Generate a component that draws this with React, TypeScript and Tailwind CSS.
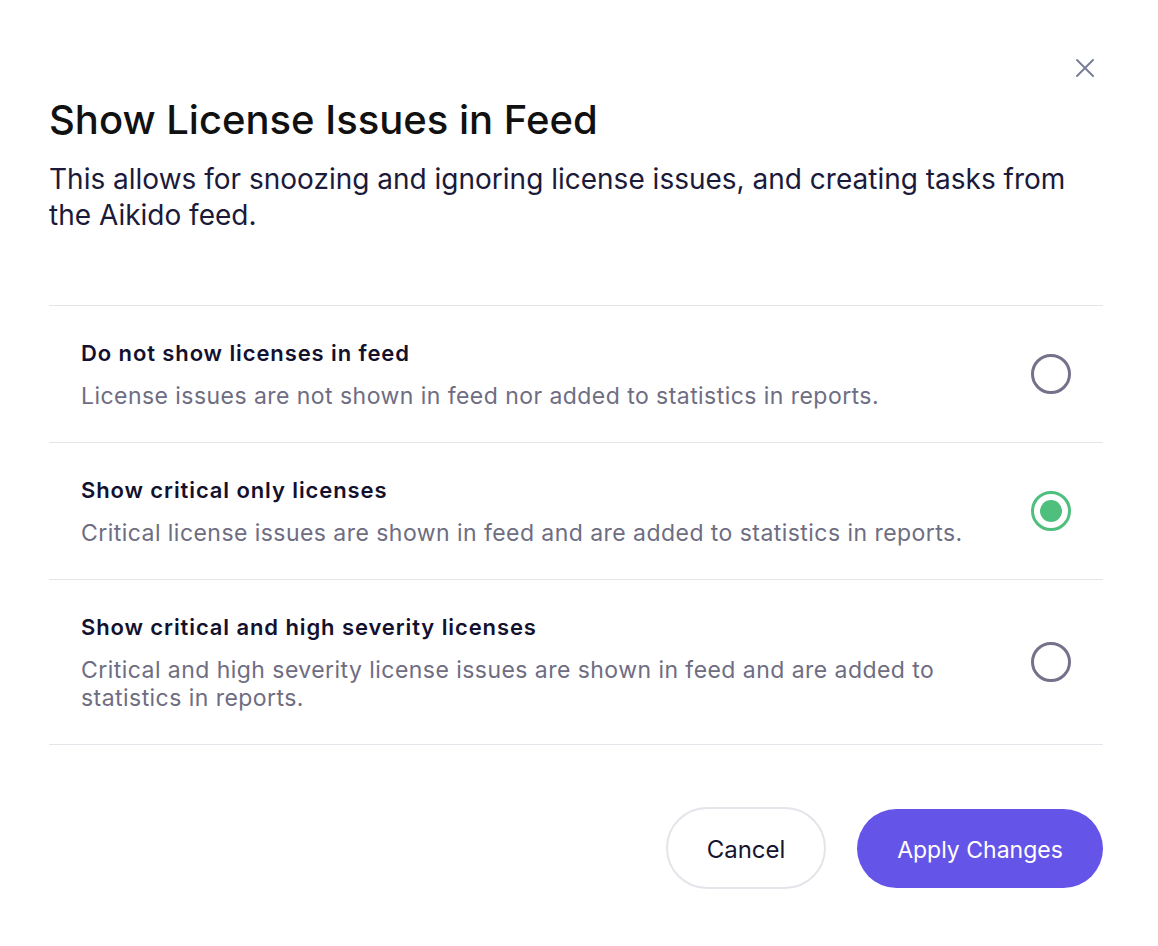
import { useState } from 'react';

// License feed settings dialog

const options = [
  {
    id: 'none',
    title: 'Do not show licenses in feed',
    description: 'License issues are not shown in feed nor added to statistics in reports.',
  },
  {
    id: 'critical',
    title: 'Show critical only licenses',
    description: 'Critical license issues are shown in feed and are added to statistics in reports.',
  },
  {
    id: 'high',
    title: 'Show critical and high severity licenses',
    description:
      'Critical and high severity license issues are shown in feed and are added to statistics in reports.',
  },
];

function Radio({ checked }: { checked: boolean }) {
  if (checked) {
    return (
      <span className="flex h-10 w-10 shrink-0 items-center justify-center rounded-full border-[3px] border-[#4fbf7e]">
        <span className="h-[22px] w-[22px] rounded-full bg-[#4fbf7e]" />
      </span>
    );
  }
  return <span className="h-10 w-10 shrink-0 rounded-full border-[3px] border-[#73728a]" />;
}

export default function App() {
  const [selected, setSelected] = useState('critical');

  return (
    <div className="min-h-[946px] bg-white font-['Inter',sans-serif] text-[#16142f]">
      <div className="pl-[49px] pr-[55px] pt-[58px]">
        {/* Close */}
        <div className="flex justify-end pr-[8px]">
          <button className="text-[#7a7f99]">
            <svg width="20" height="20" viewBox="0 0 20 20" fill="none" stroke="currentColor" strokeWidth="2" strokeLinecap="round">
              <path d="M2 2L18 18M18 2L2 18" />
            </svg>
          </button>
        </div>

        <h2 className="mt-[18px] text-[40px] font-medium leading-[48px] text-[#111111]">
          Show License Issues in Feed
        </h2>
        <p className="mt-[17px] text-[28px] leading-[36px] text-[#1b1a3a]">
          This allows for snoozing and ignoring license issues, and creating tasks from the Aikido feed.
        </p>

        <div className="mt-[72px] border-t border-[#e4e4ea]">
          {options.map((opt) => (
            <label
              key={opt.id}
              onClick={() => setSelected(opt.id)}
              className="flex cursor-pointer items-center gap-10 border-b border-[#e4e4ea] px-8 py-8"
            >
              <div className="flex-1">
                <div className="text-[22px] font-semibold leading-[30px] tracking-[0.9px] text-[#13112e]">
                  {opt.title}
                </div>
                <div className="mt-[14px] text-[23px] leading-[28px] tracking-[0.45px] text-[#6e6d82]">
                  {opt.description}
                </div>
              </div>
              <Radio checked={selected === opt.id} />
            </label>
          ))}
        </div>

        <div className="mt-[62px] flex justify-end gap-[31px]">
          <button className="h-[82px] w-[160px] rounded-full border-2 border-[#e4e4ea] pt-1 text-[24px] text-[#16142f]">
            Cancel
          </button>
          <button className="mt-[2px] h-[79px] w-[246px] rounded-full bg-[#6554e8] pt-1 text-[23px] text-white">
            Apply Changes
          </button>
        </div>
      </div>
    </div>
  );
}
